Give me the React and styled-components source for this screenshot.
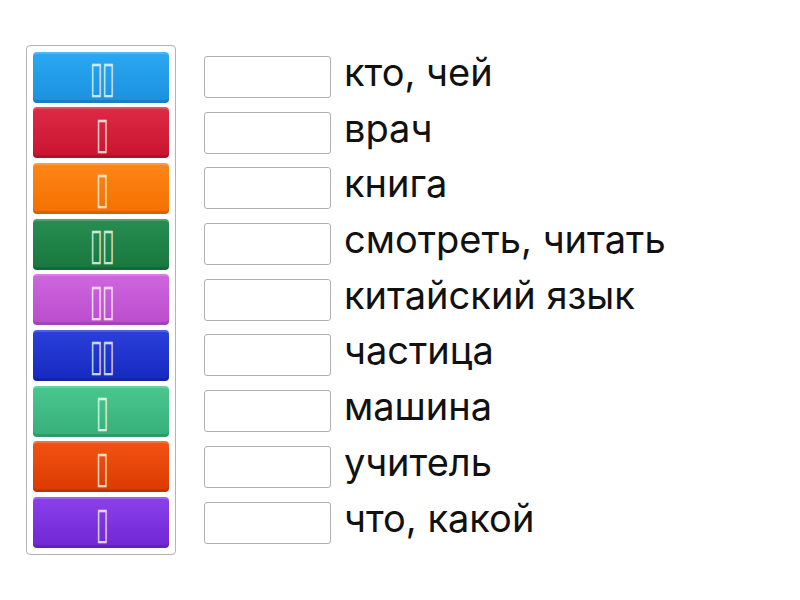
import React from 'react';
import styled, { createGlobalStyle } from 'styled-components';

const GlobalStyle = createGlobalStyle`
  html, body {
    margin: 0;
    padding: 0;
    background: #ffffff;
  }
  body {
    font-family: Inter, "Noto Sans CJK SC", sans-serif;
  }
`;

const Page = styled.main`
  display: flex;
  align-items: flex-start;
  gap: 28px;
  padding: 45px 0 0 26px;
  width: 800px;
  height: 600px;
  box-sizing: border-box;
`;

const Panel = styled.div`
  display: flex;
  flex-direction: column;
  gap: 4.7px;
  padding: 5.5px 6px;
  border: 1px solid #b4b4b4;
  border-radius: 4px;
  width: 150px;
  box-sizing: border-box;
`;

const Tile = styled.div`
  display: flex;
  align-items: center;
  justify-content: center;
  height: 51px;
  border-radius: 4px;
  background: linear-gradient(${(p) => p.$top}, ${(p) => p.$bottom});
  box-shadow: inset 0 2px 0 rgba(255, 255, 255, 0.18), inset 0 -3px 0 rgba(0, 0, 0, 0.12);
  color: rgba(255, 255, 255, 0.8);
  font-family: "DejaVu Sans", sans-serif;
`;

/* the characters in the tiles come out as empty boxes */
const Glyphs = styled.span`
  display: inline-block;
  font-size: 44px;
  line-height: 1;
  letter-spacing: -2px;
  padding-left: 2px;
  transform: scaleX(0.54);
`;

const Rows = styled.div`
  display: flex;
  flex-direction: column;
  gap: 4.7px;
  padding-top: 6.5px;
`;

const Row = styled.div`
  display: flex;
  align-items: center;
  gap: 13px;
  height: 51px;
`;

const Slot = styled.div`
  width: 127px;
  height: 42px;
  border: 1px solid #b0b0b0;
  border-radius: 3px;
  box-sizing: border-box;
  background: #fff;
`;

const Word = styled.span`
  font-family: Inter, sans-serif;
  font-size: 38px;
  line-height: 46px;
  margin-bottom: 10px;
  color: #111;
  white-space: nowrap;
`;

const tiles = [
  { n: 2, top: '#2aa9f1', bottom: '#1b90e0' },
  { n: 1, top: '#de2a44', bottom: '#c8142f' },
  { n: 1, top: '#ff8618', bottom: '#f27000' },
  { n: 2, top: '#268e50', bottom: '#19773e' },
  { n: 2, top: '#cf66df', bottom: '#b94ccc' },
  { n: 2, top: '#2b40da', bottom: '#1529bf' },
  { n: 1, top: '#4ac78f', bottom: '#36af78' },
  { n: 1, top: '#f25314', bottom: '#db3a00' },
  { n: 1, top: '#8b40ea', bottom: '#6f27d4' },
];

const words = [
  'кто, чей',
  'врач',
  'книга',
  'смотреть, читать',
  'китайский язык',
  'частица',
  'машина',
  'учитель',
  'что, какой',
];

export default function App() {
  return (
    <>
      <GlobalStyle />
      <Page>
        <Panel>
          {tiles.map((t, i) => (
            <Tile key={i} $top={t.top} $bottom={t.bottom}>
              <Glyphs>{'▯'.repeat(t.n)}</Glyphs>
            </Tile>
          ))}
        </Panel>
        <Rows>
          {words.map((w) => (
            <Row key={w}>
              <Slot />
              <Word>{w}</Word>
            </Row>
          ))}
        </Rows>
      </Page>
    </>
  );
}
